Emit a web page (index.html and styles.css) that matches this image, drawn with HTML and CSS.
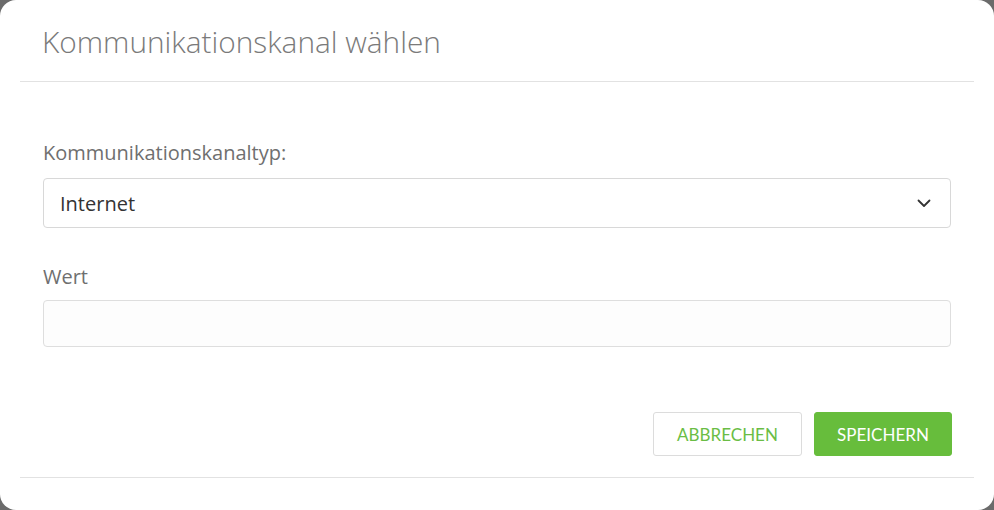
FILE: index.html
```html
<!DOCTYPE html>
<html lang="de">
<head>
<meta charset="utf-8">
<title>Kommunikationskanal wählen</title>
<link rel="stylesheet" href="styles.css">
</head>
<body>
<div class="modal">
  <div class="modal-header">
    <h1 class="modal-title">Kommunikationskanal wählen</h1>
  </div>
  <div class="modal-body">
    <div class="field">
      <label class="field-label">Kommunikationskanaltyp:</label>
      <div class="select">
        <span class="select-value">Internet</span>
        <svg class="chevron" width="14" height="9" viewBox="0 0 14 9"><path d="M1.5 1.5 L7 7 L12.5 1.5" fill="none" stroke="#333" stroke-width="1.8" stroke-linecap="round" stroke-linejoin="round"/></svg>
      </div>
    </div>
    <div class="field field-second">
      <label class="field-label">Wert</label>
      <div class="input"></div>
    </div>
  </div>
  <div class="modal-footer">
    <button class="btn btn-outline">ABBRECHEN</button>
    <button class="btn btn-primary">SPEICHERN</button>
  </div>
  <div class="footer-rule"></div>
</div>
</body>
</html>
```
FILE: styles.css
```css
html, body {
  margin: 0;
  padding: 0;
  width: 994px;
  height: 510px;
  background: #6b6b6b;
  overflow: hidden;
}
.modal {
  width: 994px;
  height: 510px;
  background: #fff;
  border-radius: 16px;
  box-sizing: border-box;
  padding: 0 20px;
  display: flex;
  flex-direction: column;
  font-family: "Open Sans", "Noto Sans", sans-serif;
}
.modal-header {
  height: 82px;
  border-bottom: 1px solid #e2e2e2;
  box-sizing: border-box;
  padding: 23px 0 0 22px;
}
.modal-title {
  margin: 0;
  font-size: 29.8px;
  font-weight: 300;
  color: #7a7a7a;
  line-height: 38px;
}
.modal-body {
  padding: 58px 23px 0 23px;
}
.field-label {
  display: block;
  font-size: 20px;
  color: #6f6f6f;
  line-height: 26px;
  margin-bottom: 12px;
}
.field-second {
  margin-top: 36px;
}
.field-second .field-label {
  margin-bottom: 10px;
}
.select {
  height: 50px;
  box-sizing: border-box;
  border: 1px solid #d8d8d8;
  border-radius: 4px;
  display: flex;
  align-items: center;
  justify-content: space-between;
  padding: 0 19px 0 16px;
}
.select-value {
  font-size: 20px;
  color: #333;
}
.chevron {
  display: block;
}
.input {
  height: 47px;
  box-sizing: border-box;
  border: 1px solid #dedede;
  border-radius: 4px;
  background: #fdfdfd;
}
.modal-footer {
  display: flex;
  justify-content: flex-end;
  gap: 12px;
  padding: 65px 22px 0 0;
}
.btn {
  height: 44px;
  border-radius: 3px;
  font-family: "Lato", "Open Sans", sans-serif;
  font-size: 17px;
  padding: 0;
  cursor: pointer;
}
.btn-outline {
  width: 149px;
  background: #fff;
  border: 1px solid #dcdcdc;
  color: #6abd45;
}
.btn-primary {
  width: 138px;
  background: #67bd3c;
  border: 1px solid #67bd3c;
  color: #fff;
}
.footer-rule {
  margin-top: 21px;
  border-top: 1px solid #e2e2e2;
}
```
